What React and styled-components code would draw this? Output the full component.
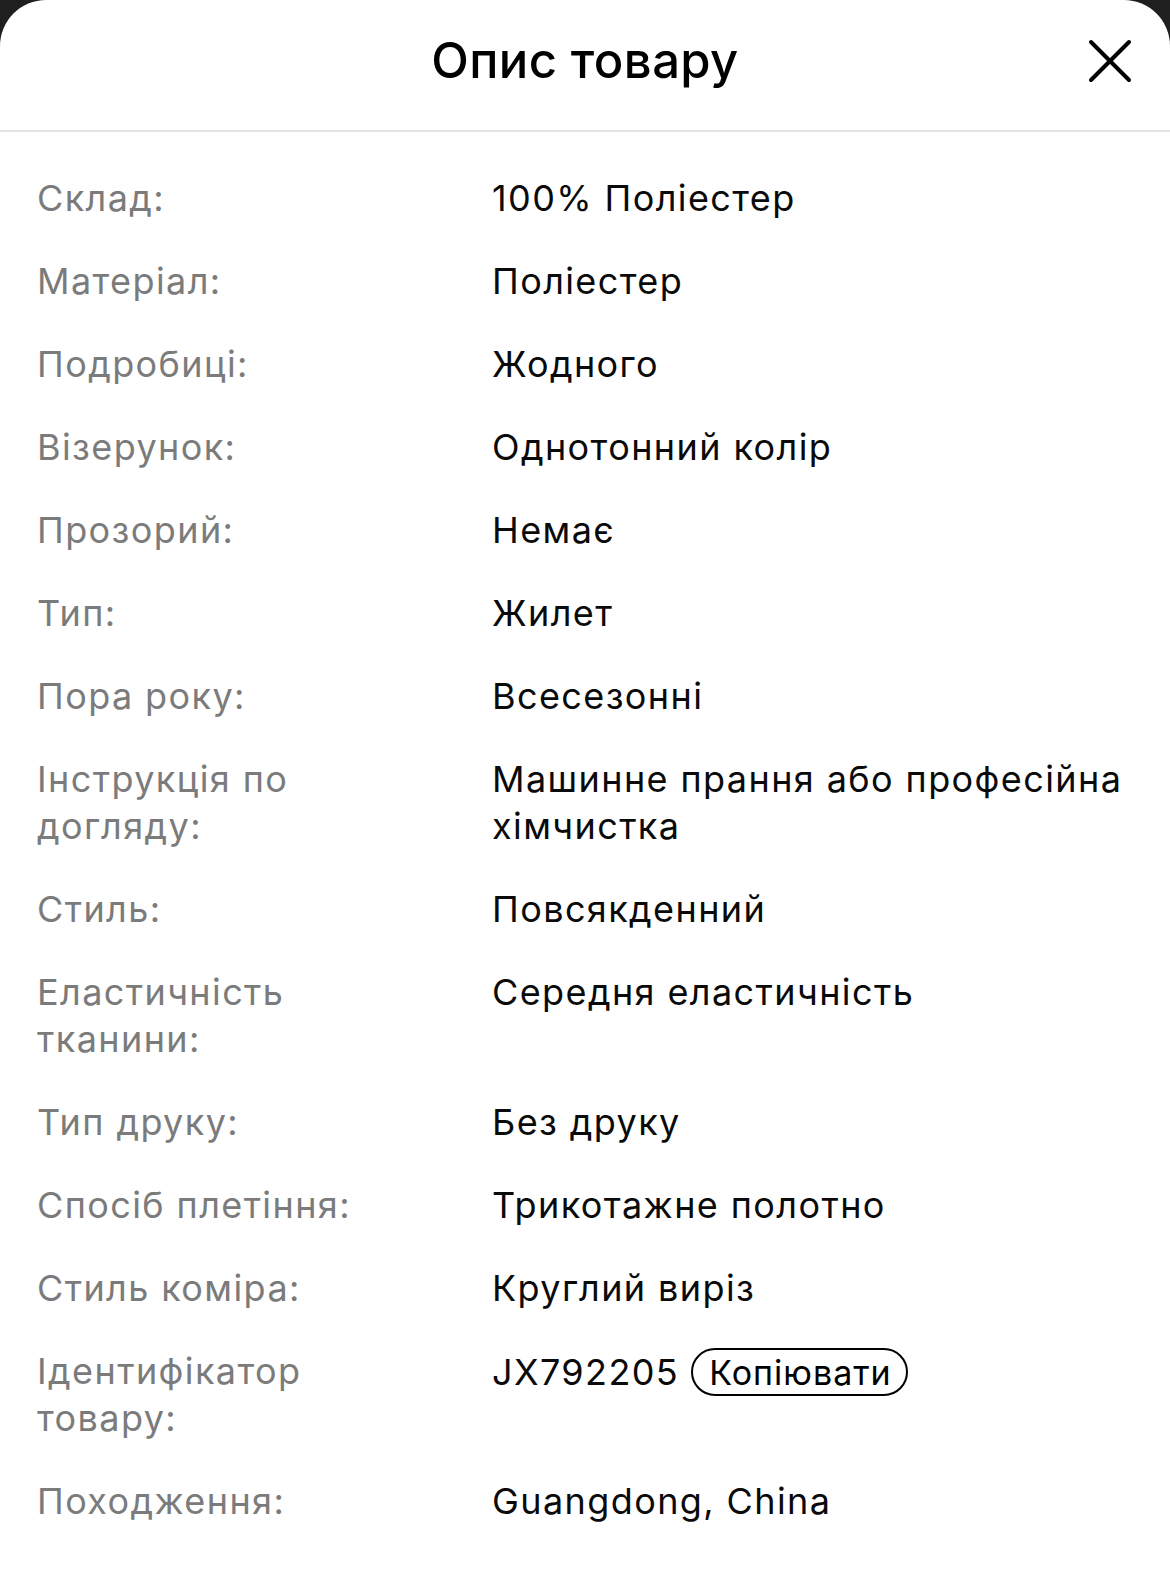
import React from "react";
import styled, { createGlobalStyle } from "styled-components";

const GlobalStyle = createGlobalStyle`
  html, body {
    margin: 0;
    padding: 0;
    background: #1f1f1f;
  }
  body {
    font-family: Inter, Roboto, "Noto Sans", "Liberation Sans", sans-serif;
    -webkit-font-smoothing: antialiased;
  }
`;

const specs = [
  { label: "Склад:", value: "100% Поліестер" },
  { label: "Матеріал:", value: "Поліестер" },
  { label: "Подробиці:", value: "Жодного" },
  { label: "Візерунок:", value: "Однотонний колір" },
  { label: "Прозорий:", value: "Немає" },
  { label: "Тип:", value: "Жилет" },
  { label: "Пора року:", value: "Всесезонні" },
  { label: "Інструкція по догляду:", value: "Машинне прання або професійна хімчистка" },
  { label: "Стиль:", value: "Повсякденний" },
  { label: "Еластичність тканини:", value: "Середня еластичність" },
  { label: "Тип друку:", value: "Без друку" },
  { label: "Спосіб плетіння:", value: "Трикотажне полотно" },
  { label: "Стиль коміра:", value: "Круглий виріз" },
  { label: "Ідентифікатор товару:", value: "JX792205", copy: true },
  { label: "Походження:", value: "Guangdong, China" },
];

const CloseIcon = () => (
  <svg width="44" height="44" viewBox="0 0 44 44" fill="none">
    <path
      d="M3 3 L41 41 M41 3 L3 41"
      stroke="#000"
      strokeWidth="4"
      strokeLinecap="round"
    />
  </svg>
);

const App = () => {
  return (
    <>
      <GlobalStyle />
      <St.Sheet>
        <St.Header>
          <St.Title>Опис товару</St.Title>
          <St.CloseButton aria-label="Закрити">
            <CloseIcon />
          </St.CloseButton>
        </St.Header>
        <St.SpecList>
          {specs.map((spec) => (
            <St.SpecRow key={spec.label}>
              <St.Label>{spec.label}</St.Label>
              <St.Value>
                {spec.value}
                {spec.copy && <St.CopyButton>Копіювати</St.CopyButton>}
              </St.Value>
            </St.SpecRow>
          ))}
        </St.SpecList>
      </St.Sheet>
    </>
  );
};

export default App;

const St = {
  Sheet: styled.div`
    width: 1170px;
    min-height: 1570px;
    background: #fff;
    border-radius: 46px 46px 0 0;
    overflow: hidden;
  `,
  Header: styled.div`
    position: relative;
    box-sizing: border-box;
    height: 132px;
    padding-bottom: 10px;
    display: flex;
    align-items: center;
    justify-content: center;
    border-bottom: 2px solid #e4e4e4;
  `,
  Title: styled.h1`
    margin: 0;
    font-size: 49px;
    font-weight: 500;
    color: #000;
    letter-spacing: 0.4px;
  `,
  CloseButton: styled.button`
    position: absolute;
    right: 38px;
    top: 39px;
    padding: 0;
    border: none;
    background: none;
    display: flex;
  `,
  SpecList: styled.div`
    display: flex;
    flex-direction: column;
    gap: 36px;
    padding: 43px 30px 40px 37px;
  `,
  SpecRow: styled.div`
    display: grid;
    grid-template-columns: 455px 1fr;
    align-items: start;
    font-size: 36px;
    line-height: 47px;
    letter-spacing: 1.4px;
  `,
  Label: styled.div`
    color: #7b7b7b;
    padding-right: 75px;
  `,
  Value: styled.div`
    color: #0a0a0a;
    display: flex;
    flex-wrap: wrap;
    align-items: center;
    gap: 12px;
  `,
  CopyButton: styled.span`
    display: inline-flex;
    align-items: center;
    box-sizing: border-box;
    height: 48px;
    padding: 0 14px 0 16px;
    border: 2px solid #000;
    border-radius: 24px;
    font-size: 34px;
    letter-spacing: 1px;
    color: #000;
  `,
};
